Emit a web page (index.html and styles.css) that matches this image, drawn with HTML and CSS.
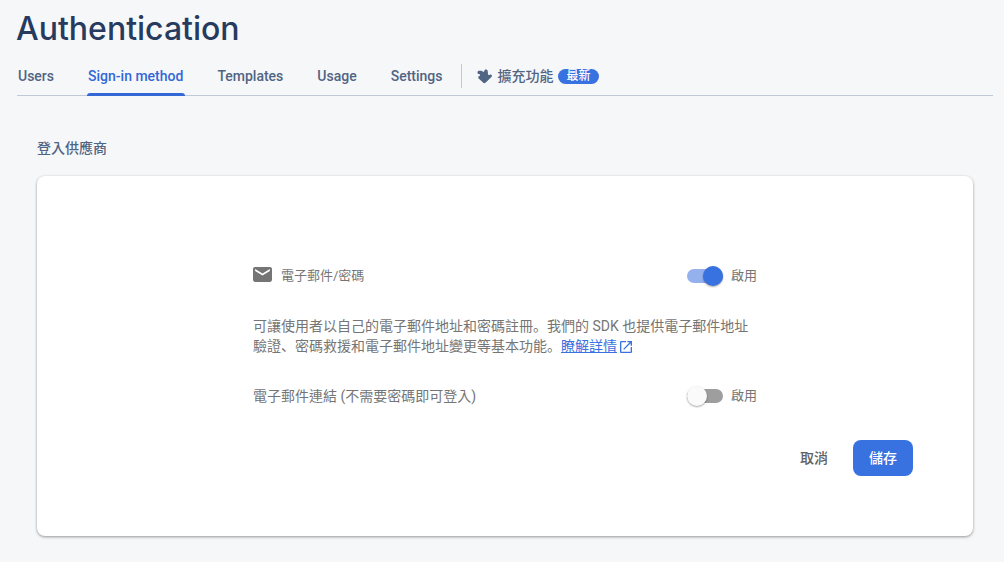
FILE: index.html
```html
<!DOCTYPE html>
<html lang="zh-Hant">
<head>
<meta charset="utf-8">
<meta name="viewport" content="width=device-width, initial-scale=1">
<title>Authentication</title>
<link rel="stylesheet" href="styles.css">
</head>
<body>
<header class="header">
  <h1 class="title">Authentication</h1>
  <nav class="tabs">
    <a class="tab" href="#users">Users</a>
    <a class="tab tab-active" href="#sign-in" aria-current="page">Sign-in method</a>
    <a class="tab" href="#templates">Templates</a>
    <a class="tab" href="#usage">Usage</a>
    <a class="tab" href="#settings">Settings</a>
    <a class="tab tab-extensions" href="#extensions">
      <svg class="ext-icon" viewBox="0 0 45 45" aria-hidden="true"><path d="M5 5h9l4 3c3 1 4-1 4-3 1-5 8-5 10 0l1 9c0 4 3 5 6 3 4-2 7 2 5 6L27 40c-2 3-6 3-8 1L4 28v-6c3 0 5-1 5-4s-2-3-5-3c-4-2-3-9 1-10z"/></svg>
      <span>擴充功能</span>
      <span class="badge">最新</span>
    </a>
  </nav>
</header>
<main class="content">
  <h2 class="section-title">登入供應商</h2>
  <form class="card">
    <div class="fields">
      <div class="row">
        <div class="provider">
          <svg class="mail-icon" viewBox="0 0 18 14" aria-hidden="true"><path d="M16 0H2C.9 0 0 .9 0 2v10c0 1.100.9 2 2 2h14c1.100 0 2-.9 2-2V2c0-1.100-.9-2-2-2zm0 3.700-7 4.300-7-4.300V1.700L9 6l7-4.300v2z"/></svg>
          <span>電子郵件/密碼</span>
        </div>
        <label class="toggle"><input class="switch" type="checkbox" role="switch" checked>啟用</label>
      </div>
      <p class="description" lang="zh-Hans">可讓使用者以自己的電子郵件地址和密碼註冊。我們的 SDK 也提供電子郵件地址驗證、密碼救援和電子郵件地址變更等基本功能。<a class="more" href="#more">瞭解詳情</a><svg class="open-icon" viewBox="0 0 18 18" aria-hidden="true"><path d="M16 16H2V2h7V0H2a2 2 0 0 0-2 2v14c0 1.100.9 2 2 2h14c1.100 0 2-.9 2-2V9h-2v7zM11 0v2h3.590l-9.830 9.830 1.410 1.410L16 3.410V7h2V0h-7z"/></svg></p>
      <div class="row">
        <span class="link-label">電子郵件連結 (不需要密碼即可登入)</span>
        <label class="toggle"><input class="switch" type="checkbox" role="switch">啟用</label>
      </div>
    </div>
    <div class="actions">
      <button class="button" type="button">取消</button>
      <button class="button button-primary" type="submit">儲存</button>
    </div>
  </form>
</main>
</body>
</html>
```
FILE: styles.css
```css
* {
  box-sizing: border-box;
}

body {
  margin: 0;
  background: #f6f7f9;
  color: #757575;
  font: 14px/20px Roboto, "Noto Sans CJK TC", sans-serif;
}

.header {
  padding: 10px 11px 0 16px;
}

.title {
  margin: 0;
  color: #263b5e;
  font: 500 32px/38px Inter, sans-serif;
}

.tabs {
  display: flex;
  gap: 32px;
  height: 48px;
  margin-left: 1px;
  border-bottom: 1px solid #c0cad9;
}

.tab {
  padding: 18px 1px 0;
  color: #506483;
  font-weight: 500;
  text-decoration: none;
  white-space: nowrap;
}

.tab-active {
  position: relative;
  color: #3367d6;
}

.tab-active::after {
  content: "";
  position: absolute;
  right: -1px;
  bottom: -1px;
  left: 0;
  height: 3px;
  border-radius: 3px 3px 0 0;
  background: #3367d6;
}

.tab-extensions {
  display: flex;
  align-items: center;
  gap: 5px;
  height: 24px;
  margin: 16px 0 0 -14px;
  padding: 0 0 0 15px;
  border-left: 1px solid #c0cad9;
}

.ext-icon {
  width: 15px;
  height: 15px;
  fill: #506483;
}

.badge {
  padding: 0 8px;
  border-radius: 8px;
  background: #3871e0;
  color: #fff;
  font-size: 12px;
  line-height: 15px;
}

.content {
  padding: 42px 31px 26px 37px;
}

.section-title {
  margin: 0 0 18px;
  color: #506483;
  font-size: 14px;
  font-weight: 500;
  line-height: 20px;
}

.card {
  padding: 88px 60px 60px;
  border-radius: 8px;
  background: #fff;
  box-shadow: 0 1px 3px rgba(0, 0, 0, 0.4);
}

.fields {
  max-width: 504px;
  margin: 0 auto;
}

.row {
  display: flex;
  align-items: center;
  justify-content: space-between;
  gap: 16px;
  min-height: 24px;
}

.provider {
  display: flex;
  align-items: center;
  gap: 9px;
  font-size: 13px;
}

.mail-icon {
  width: 19px;
  height: 15px;
  margin-bottom: 4px;
  fill: #757575;
}

.toggle {
  display: flex;
  align-items: center;
  gap: 8px;
  font-size: 13px;
}

.switch {
  display: flex;
  align-items: center;
  appearance: none;
  width: 36px;
  height: 14px;
  margin: 0;
  border-radius: 7px;
  background: #9e9e9e;
}

.switch::before {
  content: "";
  flex: none;
  width: 20px;
  height: 20px;
  border-radius: 50%;
  background: #fafafa;
  box-shadow: 0 1px 2px rgba(0, 0, 0, 0.35);
}

.switch:checked {
  justify-content: flex-end;
  background: #94b1ee;
}

.switch:checked::before {
  background: #3871e0;
}

.description {
  margin: 28px 0;
  font-family: Roboto, "Noto Sans CJK SC", sans-serif;
}

.more {
  color: #3871e0;
  text-decoration: underline;
}

.open-icon {
  width: 12px;
  height: 12px;
  margin-left: 3px;
  vertical-align: -2px;
  fill: #3871e0;
}

.actions {
  display: flex;
  justify-content: flex-end;
  gap: 9px;
  margin-top: 32px;
}

.button {
  height: 36px;
  padding: 0 16px;
  border: 0;
  border-radius: 8px;
  background: transparent;
  color: #616161;
  font: inherit;
  font-weight: 500;
}

.button-primary {
  background: #3871e0;
  color: #fff;
}
```
